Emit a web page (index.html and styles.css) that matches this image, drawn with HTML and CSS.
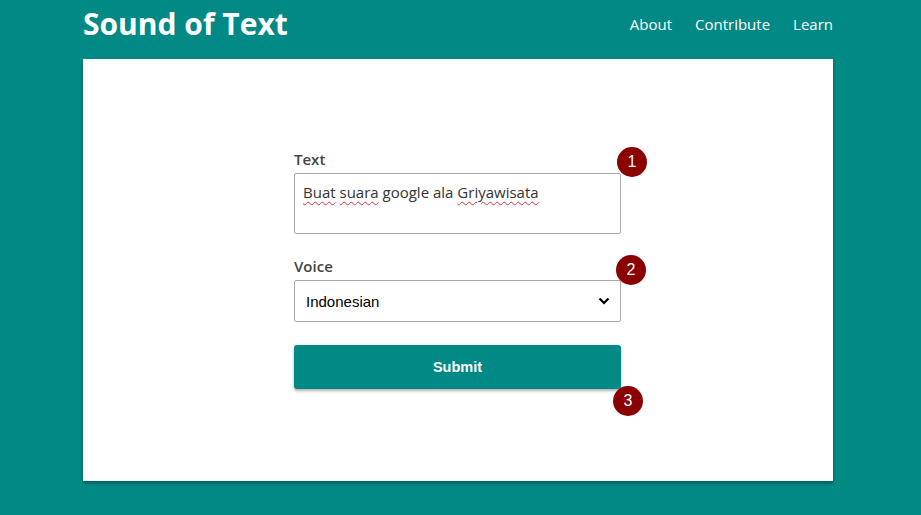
FILE: index.html
```html
<!DOCTYPE html>
<html>
<head>
<meta charset="utf-8">
<link rel="stylesheet" href="styles.css">
</head>
<body>
<div class="page">
<header class="header">
  <h1 class="brand">Sound of Text</h1>
  <nav class="nav">
    <a href="#">About</a>
    <a href="#">Contribute</a>
    <a href="#">Learn</a>
  </nav>
</header>
<main class="card">
  <form class="form">
    <div class="group">
      <label class="label">Text</label>
      <div class="textarea"><span class="sp">Buat</span> <span class="sp">suara</span> google ala <span class="sp">Griyawisata</span></div>
      <span class="badge badge-1">1</span>
    </div>
    <div class="group">
      <label class="label">Voice</label>
      <div class="select">
        <span>Indonesian</span>
        <svg class="chev" width="12" height="8" viewBox="0 0 12 8"><path d="M1.5 1.5 L6 6 L10.5 1.5" fill="none" stroke="#000" stroke-width="2.2"/></svg>
      </div>
      <span class="badge badge-2">2</span>
    </div>
    <div class="group group-btn">
      <button type="button" class="submit">Submit</button>
      <span class="badge badge-3">3</span>
    </div>
  </form>
</main>
</div>
</body>
</html>
```
FILE: styles.css
```css
* { box-sizing: border-box; }
body {
  margin: 0;
  background: #008985;
  font-family: "Open Sans", sans-serif;
  height: 515px;
  overflow: hidden;
}
.page {
  width: 916px;
}
.header {
  width: 750px;
  margin: 0 auto;
  height: 59px;
  display: flex;
  justify-content: space-between;
  align-items: flex-start;
}
.brand {
  margin: 4px 0 0 0;
  font-size: 30px;
  font-weight: 700;
  color: #fff;
  line-height: 40px;
}
.nav {
  display: flex;
  gap: 23px;
  margin-top: 12px;
}
.nav a {
  color: #fff;
  text-decoration: none;
  font-size: 15px;
  line-height: 24px;
}
.card {
  width: 750px;
  height: 422px;
  margin: 0 auto;
  background: #fff;
  box-shadow: 0 2px 3px rgba(0,0,0,0.35);
  padding-top: 88px;
}
.form {
  width: 327px;
  margin-left: 211px;
  display: flex;
  flex-direction: column;
}
.group {
  position: relative;
  display: flex;
  flex-direction: column;
}
.group + .group { margin-top: 20px; }
.group-btn { margin-top: 23px !important; }
.label {
  font-size: 15px;
  font-weight: 600;
  color: #444;
  line-height: 20px;
  margin-top: 2px;
  margin-bottom: 4px;
}
.textarea {
  height: 61px;
  border: 1px solid #a9a9a9;
  border-radius: 2px;
  padding: 7px 8px;
  font-size: 15px;
  color: #333;
  line-height: 22px;
}
.sp {
  text-decoration: underline wavy #d33;
  text-decoration-thickness: 1px;
  text-underline-offset: 3px;
}
.select {
  height: 42px;
  border: 1px solid #a9a9a9;
  border-radius: 2px;
  padding: 0 8px 0 11px;
  display: flex;
  align-items: center;
  justify-content: space-between;
  font-family: "Liberation Sans", Arial, sans-serif;
  font-size: 15px;
  color: #000;
}
.chev { margin-right: 2px; }
.submit {
  height: 44px;
  border: none;
  border-radius: 3px;
  background: #008985;
  color: #fff;
  font-family: "Liberation Sans", Arial, sans-serif;
  font-weight: 700;
  font-size: 14.5px;
  box-shadow: 0 2px 3px rgba(0,0,0,0.3);
}
.badge {
  position: absolute;
  width: 30px;
  height: 30px;
  border-radius: 50%;
  background: #8b0000;
  color: #fff;
  font-family: "Liberation Sans", Arial, sans-serif;
  font-size: 16px;
  line-height: 30px;
  text-align: center;
}
.badge-1 { left: 323px; top: 0px; }
.badge-2 { left: 322px; top: 1px; }
.badge-3 { left: 319px; top: 41px; }
```
